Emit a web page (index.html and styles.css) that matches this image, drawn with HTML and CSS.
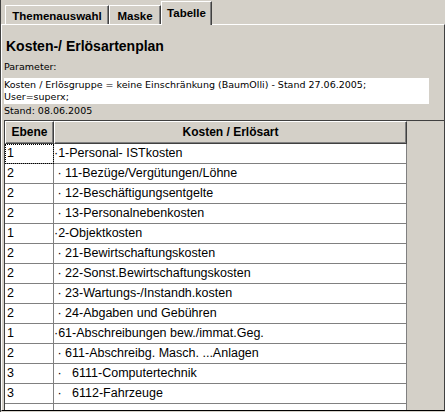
FILE: index.html
```html
<!DOCTYPE html>
<html lang="de">
<head>
    <meta charset="UTF-8">
    <title>Kosten-/ Erlösartenplan</title>
    <link rel="stylesheet" href="styles.css">
</head>
<body>
    <!-- Reiter oben -->
    <div class="tabs">
        <div class="tab tab-first">Themenauswahl</div>
        <div class="tab tab-mid">Maske</div>
        <div class="tab active">Tabelle</div>
    </div>

    <div class="panel">
        <h1>Kosten-/ Erlösartenplan</h1>
        <div class="label">Parameter:</div>
        <div class="params">Kosten / Erlösgruppe = keine Einschränkung (BaumOlli) - Stand 27.06.2005;<br>User=superx;</div>
        <div class="label stand">Stand: 08.06.2005</div>

        <!-- Ergebnistabelle -->
        <div class="grid">
            <div class="row head">
                <div class="hcell">Ebene</div>
                <div class="hcell">Kosten / Erlösart</div>
            </div>
            <div class="row">
                <div class="cell focus">1</div>
                <div class="cell">·1-Personal- ISTkosten</div>
            </div>
            <div class="row">
                <div class="cell">2</div>
                <div class="cell"> · 11-Bezüge/Vergütungen/Löhne</div>
            </div>
            <div class="row">
                <div class="cell">2</div>
                <div class="cell"> · 12-Beschäftigungsentgelte</div>
            </div>
            <div class="row">
                <div class="cell">2</div>
                <div class="cell"> · 13-Personalnebenkosten</div>
            </div>
            <div class="row">
                <div class="cell">1</div>
                <div class="cell">·2-Objektkosten</div>
            </div>
            <div class="row">
                <div class="cell">2</div>
                <div class="cell"> · 21-Bewirtschaftungskosten</div>
            </div>
            <div class="row">
                <div class="cell">2</div>
                <div class="cell"> · 22-Sonst.Bewirtschaftungskosten</div>
            </div>
            <div class="row">
                <div class="cell">2</div>
                <div class="cell"> · 23-Wartungs-/Instandh.kosten</div>
            </div>
            <div class="row">
                <div class="cell">2</div>
                <div class="cell"> · 24-Abgaben und Gebühren</div>
            </div>
            <div class="row">
                <div class="cell">1</div>
                <div class="cell">·61-Abschreibungen bew./immat.Geg.</div>
            </div>
            <div class="row">
                <div class="cell">2</div>
                <div class="cell"> · 611-Abschreibg. Masch. ...Anlagen</div>
            </div>
            <div class="row">
                <div class="cell">3</div>
                <div class="cell"> ·   6111-Computertechnik</div>
            </div>
            <div class="row">
                <div class="cell">3</div>
                <div class="cell"> ·   6112-Fahrzeuge</div>
            </div>
            <div class="row">
                <div class="cell"></div>
                <div class="cell"></div>
            </div>
        </div>
    </div>
</body>
</html>
```

FILE: styles.css
```css
html, body {
    margin: 0;
    padding: 0;
    height: 412px;
    overflow: hidden;
}
body {
    font-family: "Liberation Sans", Arial, sans-serif;
    background-color: #d4d0c8;
    color: #000;
    display: flex;
    flex-direction: column;
    border-left: 1px solid #404040;
    box-sizing: border-box;
}
.tabs {
    display: flex;
    align-items: flex-end;
    height: 24px;
    padding-left: 4px;
    flex: none;
}
.tab {
    box-sizing: border-box;
    height: 19px;
    padding-top: 4px;
    font-size: 11.5px;
    font-weight: bold;
    text-align: center;
    border-top: 1px solid #fff;
    border-left: 1px solid #fff;
    border-right: 1px solid #404040;
    box-shadow: inset -1px 0 0 #808080;
}
.tab-first {
    width: 104px;
}
.tab-mid {
    width: 52px;
}
.tab.active {
    width: 51px;
    height: 24px;
    padding-top: 5px;
    margin-bottom: -1px;
    background-color: #d4d0c8;
    position: relative;
}
.panel {
    flex: 1;
    display: flex;
    flex-direction: column;
    border-top: 1px solid #fff;
    border-left: 1px solid #fff;
    border-right: 1px solid #404040;
    border-bottom: 1px solid #000;
    margin-bottom: 1px;
    padding-left: 2px;
    min-height: 0;
}
h1 {
    font-size: 14px;
    font-weight: bold;
    margin: 13px 0 0 2px;
    line-height: 17px;
}
.label {
    font-family: "DejaVu Sans", Verdana, sans-serif;
    font-size: 9.5px;
    line-height: 11px;
    margin-top: 6px;
}
.params {
    font-family: "DejaVu Sans", Verdana, sans-serif;
    font-size: 9.5px;
    line-height: 12px;
    background-color: #fff;
    width: 425px;
    padding: 1px 0;
    margin-top: 6px;
}
.label.stand {
    margin-top: 0;
    line-height: 13px;
}
.grid {
    flex: 1;
    margin-top: 3px;
    border-top: 1px solid #404040;
    border-left: 1px solid #404040;
    overflow: hidden;
    min-height: 0;
}
.row {
    display: grid;
    grid-template-columns: 49px 353px;
    height: 20px;
}
.row.head {
    height: 23px;
}
.hcell {
    box-sizing: border-box;
    font-size: 12px;
    font-weight: bold;
    text-align: center;
    line-height: 20px;
    border-top: 1px solid #fff;
    border-left: 1px solid #fff;
    border-right: 1px solid #404040;
    border-bottom: 1px solid #404040;
    box-shadow: inset -1px -1px 0 #808080;
}
.cell {
    box-sizing: border-box;
    background-color: #fff;
    font-size: 12.5px;
    line-height: 19px;
    padding-left: 2px;
    white-space: pre;
    border-right: 1px solid #808080;
    border-bottom: 1px solid #808080;
}
.row .cell:last-child {
    padding-left: 0;
}
.cell.focus {
    outline: 1px dotted #000;
    outline-offset: -1px;
}
```
